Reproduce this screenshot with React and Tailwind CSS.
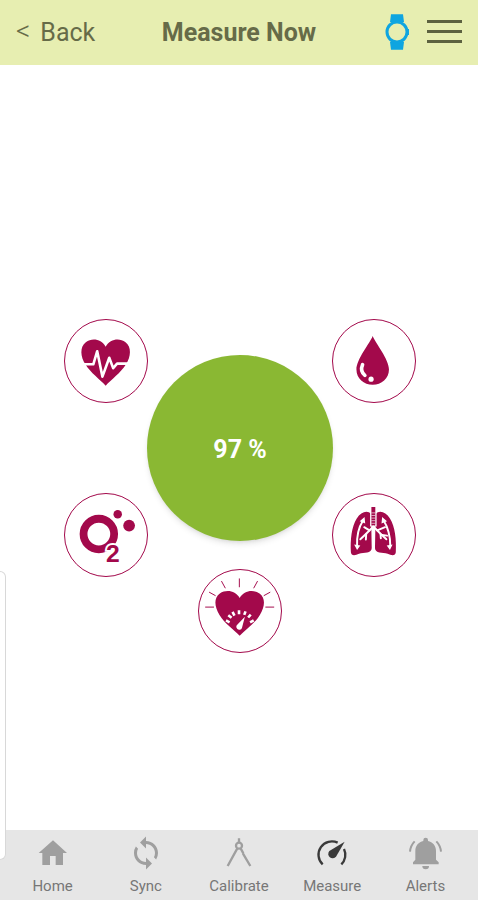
import { MdSync } from "react-icons/md";

const CRIMSON = "#a3094b";

// Heart with a pulse line running through it
function HeartRateIcon() {
  return (
    <svg viewBox="24 26 252 252" className="size-full" aria-hidden="true">
      <path
        fill={CRIMSON}
        d="M149 228C132 209 102 188 87 163C71 138 69 108 88 94C108 80 136 85 149 108C162 85 190 80 210 94C229 108 227 138 211 163C196 188 166 209 149 228Z"
      />
      <path
        fill="none"
        stroke="#fff"
        strokeWidth="8"
        strokeLinejoin="round"
        d="M70 162H111L123 122L139 200L160 142L172 174L184 160H228"
      />
    </svg>
  );
}

function BloodDropIcon() {
  return (
    <svg viewBox="24 26 252 252" className="size-full" aria-hidden="true">
      <path
        fill={CRIMSON}
        d="M146 75C154 97 196 146 196 178C196 206 173 225 146 225C119 225 96 206 96 178C96 146 138 97 146 75Z"
      />
      <path fill="none" stroke="#fff" strokeWidth="11" strokeLinecap="round" d="M115 163C109 177 113 189 122 196" />
      <circle cx="141" cy="208" r="8" fill="#fff" />
    </svg>
  );
}

function OxygenIcon() {
  return (
    <svg viewBox="24 24 252 252" className="size-full" aria-hidden="true">
      <circle cx="128" cy="147" r="47" fill="none" stroke={CRIMSON} strokeWidth="24" />
      <circle cx="186" cy="86" r="13" fill={CRIMSON} />
      <circle cx="221" cy="121" r="18" fill={CRIMSON} />
      <text
        x="171"
        y="234"
        textAnchor="middle"
        fontSize="76"
        fontWeight="700"
        fill={CRIMSON}
        stroke="#fff"
        strokeWidth="12"
        paintOrder="stroke"
        className="font-['Liberation_Sans',sans-serif]"
      >
        2
      </text>
    </svg>
  );
}

function LungsIcon() {
  return (
    <svg viewBox="24 24 252 252" className="size-full" aria-hidden="true">
      <g fill={CRIMSON}>
        <path d="M141 86C130 72 110 79 97 99C81 124 77 165 79 203C80 215 92 213 104 208C119 202 143 208 143 190Z" />
        <path d="M155 86C166 72 186 79 199 99C215 124 219 165 217 203C216 215 204 213 192 208C177 202 153 208 153 190Z" />
      </g>
      <path stroke="#fff" strokeWidth="20" d="M148 64V124" />
      <path stroke={CRIMSON} strokeWidth="12" d="M148 64V121" />
      <path stroke="#fff" strokeWidth="2" d="M142 82H154M142 90H154M142 98H154M142 106H154M142 114H154" />
      <g fill="none" stroke="#fff" strokeWidth="6" strokeLinecap="round">
        <path d="M148 124L126 146L108 163M148 124L170 146L188 163" />
        <path d="M136 136L120 126M126 146L125 164M160 136L184 126M170 146L171 160M175 150L190 152" />
        <path d="M116 106C104 124 97 156 98 184M180 106C192 124 201 156 200 184" />
      </g>
      <g fill="#fff">
        <path d="M121 95L123 115L106 108ZM89 179L108 182L98 196Z" />
        <path d="M175 95L173 115L190 108ZM207 179L189 182L199 196Z" />
      </g>
    </svg>
  );
}

// Heart with a gauge inside and rays around it
function BloodPressureIcon() {
  return (
    <svg viewBox="24 26 252 252" className="size-full" aria-hidden="true">
      <path
        fill={CRIMSON}
        d="M149 228C132 209 102 190 87 164C71 138 69 112 88 98C108 85 136 89 149 112C162 89 190 85 210 98C229 112 227 138 211 164C196 190 166 209 149 228Z"
      />
      <path
        stroke={CRIMSON}
        strokeWidth="3"
        d="M148 52V79M93 60L105 82M204 60L192 82M55 94L75 105M243 94L223 105M43 140H70M228 140H255"
      />
      <path
        stroke="#fff"
        strokeWidth="8"
        d="M107 181L118 187M114 165L124 173M127 155L133 166M147 150V162M167 153L163 164M183 163L175 172M192 181L181 187"
      />
      <path fill="#fff" d="M165 170L156 204A9 9 0 1 1 143 193Z" />
    </svg>
  );
}

function WatchIcon() {
  return (
    <svg viewBox="0 0 72 108" className="h-9 w-6" fill="#0fa5e0" aria-hidden="true">
      <path d="M18 1H54L57 24H15ZM15 84H57L54 107H18Z" />
      <circle cx="36" cy="54" r="30" fill="none" stroke="#0fa5e0" strokeWidth="9" />
      <path d="M68 45H72V63H68Z" />
    </svg>
  );
}

function HomeIcon() {
  return (
    <svg viewBox="106 44 108 108" className="size-9" fill="currentColor" aria-hidden="true">
      <path d="M160 60L202 98H190V134H168V107H151V134H128V98H117Z" />
    </svg>
  );
}

function CompassIcon() {
  return (
    <svg
      viewBox="0 0 108 108"
      className="size-9"
      fill="none"
      stroke="currentColor"
      strokeWidth="7"
      aria-hidden="true"
    >
      <circle cx="54" cy="32" r="9" />
      <path d="M54 10V23M49 40L20 93M59 40L67 55M66 56L88 93" />
    </svg>
  );
}

function GaugeIcon() {
  return (
    <svg viewBox="230 44 108 108" className="size-9" fill="none" aria-hidden="true">
      <path stroke="currentColor" strokeWidth="7" d="M256 132A40 40 0 0 1 301 67M320 86A40 40 0 0 1 312 132" />
      <path fill="currentColor" d="M322 64L296 109A13 13 0 1 1 276 92Z" />
    </svg>
  );
}

function BellIcon() {
  return (
    <svg viewBox="509 44 108 108" className="size-9" fill="currentColor" aria-hidden="true">
      <path d="M527 132V126L534 118V92C534 76 544 65 558 62V59A7 7 0 0 1 572 59V62C586 65 596 76 596 92V118L604 126V132Z" />
      <path d="M555 137H575A10 10 0 0 1 555 137Z" />
      <path fill="none" stroke="currentColor" strokeWidth="6" d="M532 63C524 71 519 81 518 94M597 63C605 71 610 81 611 94" />
    </svg>
  );
}

const navItems = [
  { label: "Home", icon: HomeIcon },
  { label: "Sync", icon: () => <MdSync className="size-9" /> },
  { label: "Calibrate", icon: CompassIcon },
  { label: "Measure", icon: GaugeIcon, active: true },
  { label: "Alerts", icon: BellIcon },
];

function VitalButton({ label, children }) {
  return (
    <button
      type="button"
      aria-label={label}
      className="size-[84px] shrink-0 overflow-hidden rounded-full border border-[#a3094b] bg-white"
    >
      {children}
    </button>
  );
}

export default function App() {
  return (
    <div className="relative flex min-h-screen flex-col bg-white font-[Roboto,sans-serif]">
      <header className="grid h-[65px] grid-cols-[1fr_auto_1fr] items-center bg-[#e7eeb1] px-4 text-[25px] text-[#666b48]">
        <a href="#back" className="flex items-center gap-2.5">
          <span aria-hidden="true" className="pb-1 text-[28px] leading-7 font-light">
            &lt;
          </span>
          Back
        </a>
        <h1 className="font-bold">Measure Now</h1>
        <div className="flex items-center justify-end gap-[18px] pb-0.5">
          <WatchIcon />
          <button type="button" aria-label="Menu" className="flex w-[35px] flex-col gap-[7px]">
            <span className="h-[3px] w-full bg-[#5d6240]" />
            <span className="h-[3px] w-full bg-[#5d6240]" />
            <span className="h-[3px] w-full bg-[#5d6240]" />
          </button>
        </div>
      </header>

      <main className="flex flex-1 flex-col items-center justify-center pt-[76px] pl-0.5">
        <div className="flex items-center">
          <div className="flex flex-col gap-[90px]">
            <VitalButton label="Heart rate">
              <HeartRateIcon />
            </VitalButton>
            <VitalButton label="Blood oxygen">
              <OxygenIcon />
            </VitalButton>
          </div>
          {/* Progress of the current reading */}
          <div className="-mx-px flex size-[186px] items-center justify-center rounded-full bg-[#8ab833] pt-1 text-[25px] font-bold text-white shadow-md">
            97 %
          </div>
          <div className="flex flex-col gap-[90px]">
            <VitalButton label="Blood glucose">
              <BloodDropIcon />
            </VitalButton>
            <VitalButton label="Respiration">
              <LungsIcon />
            </VitalButton>
          </div>
        </div>
        <div className="-mt-2 flex">
          <VitalButton label="Blood pressure">
            <BloodPressureIcon />
          </VitalButton>
        </div>
      </main>

      <nav className="flex h-[70px] bg-[#e6e6e6] px-1.5">
        {navItems.map(({ label, icon: Icon, active }) => (
          <a
            key={label}
            href={`#${label.toLowerCase()}`}
            className="flex flex-1 flex-col items-center pt-[5px] text-[15px] leading-5 text-[#777]"
          >
            <span className={active ? "text-[#3a3a3a]" : "text-[#9f9f9f]"}>
              <Icon />
            </span>
            <span className="mt-[5px]">{label}</span>
          </a>
        ))}
      </nav>

      {/* Edge of the side drawer */}
      <div className="absolute bottom-10 left-0 h-[289px] w-1.5 rounded-r-md border border-l-0 border-[#d8d8d8] bg-white" />
    </div>
  );
}
